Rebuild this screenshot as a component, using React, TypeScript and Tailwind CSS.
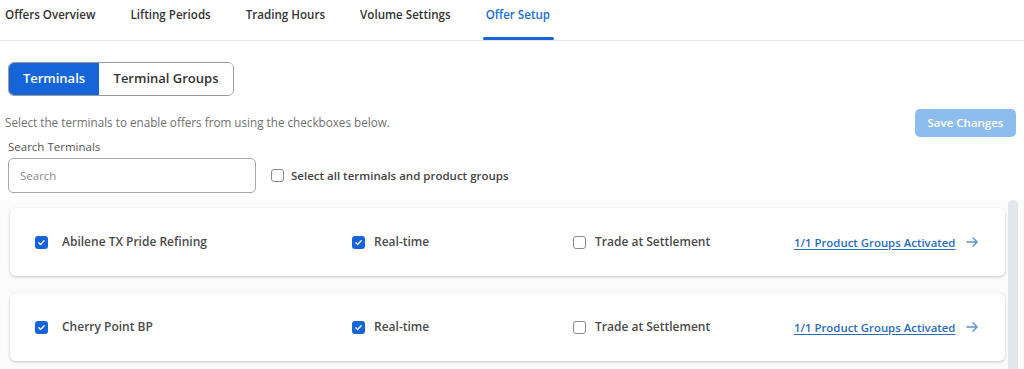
import { useState } from "react";

const tabs = [
  "Offers Overview",
  "Lifting Periods",
  "Trading Hours",
  "Volume Settings",
  "Offer Setup",
];

const terminals = [
  { nombre: "Abilene TX Pride Refining", activo: true, realTime: true, settlement: false },
  { nombre: "Cherry Point BP", activo: true, realTime: true, settlement: false },
];

function Check({ checked }: { checked: boolean }) {
  if (!checked) {
    return (
      <span className="w-[13px] h-[13px] rounded-[3px] border border-[#8a8a8a] bg-white shrink-0" />
    );
  }
  return (
    <span className="w-[13px] h-[13px] rounded-[3px] bg-[#1565d8] shrink-0 flex items-center justify-center">
      <svg width="9" height="9" viewBox="0 0 12 12" fill="none">
        <path d="M2.5 6.3l2.3 2.3 4.7-5" stroke="white" strokeWidth="1.8" strokeLinecap="round" strokeLinejoin="round" />
      </svg>
    </span>
  );
}

export default function App() {
  const [tab] = useState("Offer Setup");

  return (
    <div
      className="w-[1024px] h-[369px] overflow-hidden bg-white text-[#333]"
      style={{ fontFamily: '"Open Sans", "Liberation Sans", sans-serif' }}
    >
      <div className="flex h-[41px] border-b border-[#e6e8eb] pl-[5px]">
        {tabs.map((t) => (
          <div
            key={t}
            className={`mr-[35px] h-full flex items-center text-[11.6px] font-semibold relative ${
              t === tab ? "text-[#1a6fd0]" : "text-[#333]"
            }`}
          >
            <span className="-mt-[11px]">{t}</span>
            {t === tab && (
              <span className="absolute left-[-3px] right-[-4px] bottom-[0px] h-[3px] bg-[#1565d8] rounded-full" />
            )}
          </div>
        ))}
      </div>

      <div className="pl-[8px] pt-[21px]">
        <div className="inline-flex h-[34px] rounded-[6px] border border-[#9a9a9a] overflow-hidden">
          <div className="w-[90px] bg-[#1565d8] text-white text-[13px] font-semibold flex items-center justify-center">
            Terminals
          </div>
          <div className="w-[134px] bg-white text-[#333] text-[13px] font-semibold flex items-center justify-center">
            Terminal Groups
          </div>
        </div>
      </div>

      <div className="flex items-start justify-between pl-[5px] pr-[8px] mt-[13px]">
        <p className="text-[11.7px] text-[#707070] pt-[5px]">
          Select the terminals to enable offers from using the checkboxes below.
        </p>
        <button className="w-[101px] h-[28px] rounded-[5px] bg-[#8dbdee] text-white text-[11.5px] font-semibold">
          Save Changes
        </button>
      </div>

      <div className="pl-[8px] mt-[1px]">
        <div className="text-[11.5px] text-[#555]">Search Terminals</div>
        <div className="flex items-center mt-[3px]">
          <div className="w-[248px] h-[35px] rounded-[5px] border border-[#a8a8a8] flex items-center pl-[11px] text-[11.5px] text-[#8a8a8a]">
            Search
          </div>
          <label className="flex items-center gap-[7px] ml-[15px] text-[11.5px] font-semibold text-[#444]">
            <Check checked={false} />
            Select all terminals and product groups
          </label>
        </div>
      </div>

      <div className="flex mt-[7px] h-[200px] bg-[#fbfbfc]">
        <div className="flex-1 flex flex-col gap-[17px] pl-[10px] pr-[3px] pt-[8px]">
          {terminals.map((term) => (
            <div
              key={term.nombre}
              className="h-[68px] bg-white rounded-[6px] shadow-[0_1px_3px_rgba(0,0,0,0.22)] flex items-center text-[12px] font-semibold text-[#4a4a4a]"
            >
              <div className="w-[327px] flex items-center gap-[14px] pl-[25px]">
                <Check checked={term.activo} />
                {term.nombre}
              </div>
              <div className="w-[221px] flex items-center gap-[9px] pl-[15px]">
                <Check checked={term.realTime} />
                Real-time
              </div>
              <div className="w-[236px] flex items-center gap-[9px] pl-[15px]">
                <Check checked={term.settlement} />
                Trade at Settlement
              </div>
              <div className="flex items-center gap-[11px] text-[11.4px] text-[#2a6bc0]">
                <span className="underline underline-offset-2">1/1 Product Groups Activated</span>
                <svg width="13" height="12" viewBox="0 0 14 12" fill="none">
                  <path d="M1 6h11M7.5 1.5L12 6l-4.5 4.5" stroke="#5a8fd0" strokeWidth="1.4" strokeLinecap="round" strokeLinejoin="round" />
                </svg>
              </div>
            </div>
          ))}
        </div>
        <div className="w-[10px] mr-[6px] bg-[#e3e6ea] rounded-t-[5px]" />
      </div>
    </div>
  );
}
